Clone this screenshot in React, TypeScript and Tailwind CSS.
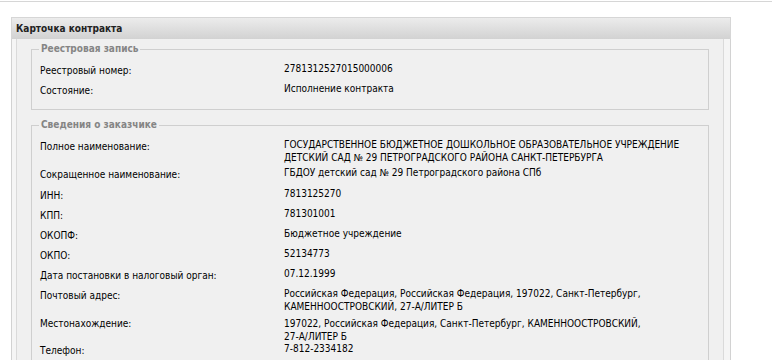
import React from "react";

type Row = { label: string; lines: string[]; h: number; lpt?: number };

const reg: Row[] = [
  { label: "Реестровый номер:", lines: ["2781312527015000006"], h: 20 },
  { label: "Состояние:", lines: ["Исполнение контракта"], h: 20 },
];

const cust: Row[] = [
  {
    label: "Полное наименование:",
    lines: [
      "ГОСУДАРСТВЕННОЕ БЮДЖЕТНОЕ ДОШКОЛЬНОЕ ОБРАЗОВАТЕЛЬНОЕ УЧРЕЖДЕНИЕ",
      "ДЕТСКИЙ САД № 29 ПЕТРОГРАДСКОГО РАЙОНА САНКТ-ПЕТЕРБУРГА",
    ],
    h: 28,
  },
  { label: "Сокращенное наименование:", lines: ["ГБДОУ детский сад № 29 Петроградского района СПб"], h: 21 },
  { label: "ИНН:", lines: ["7813125270"], h: 20 },
  { label: "КПП:", lines: ["781301001"], h: 20 },
  { label: "ОКОПФ:", lines: ["Бюджетное учреждение"], h: 20 },
  { label: "ОКПО:", lines: ["52134773"], h: 20 },
  { label: "Дата постановки в налоговый орган:", lines: ["07.12.1999"], h: 20 },
  {
    label: "Почтовый адрес:",
    lines: [
      "Российская Федерация, Российская Федерация, 197022, Санкт-Петербург,",
      "КАМЕННООСТРОВСКИЙ, 27-А/ЛИТЕР Б",
    ],
    h: 30,
  },
  {
    label: "Местонахождение:",
    lines: [
      "197022, Российская Федерация, Санкт-Петербург, КАМЕННООСТРОВСКИЙ,",
      "27-А/ЛИТЕР Б",
    ],
    h: 25,
    lpt: 4,
  },
  { label: "Телефон:", lines: ["7-812-2334182"], h: 20 },
];

function Rows({ rows }: { rows: Row[] }) {
  return (
    <div className="flex flex-col">
      {rows.map((r) => (
        <div key={r.label} className="flex shrink-0" style={{ height: r.h }}>
          <div
            className="w-[252px] shrink-0 pl-[8px] leading-[13px] whitespace-nowrap"
            style={{ paddingTop: r.lpt ?? 6 }}
          >
            {r.label}
          </div>
          <div className="pt-[4px] leading-[13px] whitespace-nowrap">
            {r.lines.map((l, i) => (
              <div key={i}>{l}</div>
            ))}
          </div>
        </div>
      ))}
    </div>
  );
}

function Fieldset({ title, children, className }: { title: string; children: React.ReactNode; className?: string }) {
  return (
    <fieldset className={"min-w-0 border border-[#cfcfcf] mx-[14px] " + (className ?? "")}>
      <legend className="ml-[7px] px-[2px] font-bold text-[#858585] leading-[12px]">{title}</legend>
      {children}
    </fieldset>
  );
}

export default function App() {
  return (
    <div
      className="w-[772px] h-[360px] overflow-hidden bg-white text-[10px] text-black"
      style={{ fontFamily: '"DejaVu Sans Condensed", "DejaVu Sans", sans-serif' }}
    >
      <div className="h-[2px] border-b border-[#d6d6d6]" />
      <div className="ml-[11px] mt-[15px] w-[720px]">
        <div className="h-[22px] border-t border-x border-[#d6d6d6] bg-gradient-to-b from-[#ececec] to-[#d2d2d2] pl-[4px] pt-[4px] leading-[13px] font-bold text-[#222]">
          Карточка контракта
        </div>
        <div className="border-x border-[#d2d2d2] bg-[#f5f5f5] pl-[4px] pr-[6px] h-[330px]">
          <div className="border-x border-[#dadada] bg-[#f0f0f0] h-full pt-[4px]">
            <Fieldset title="Реестровая запись" className="pt-[3px] pb-[11px]">
              <Rows rows={reg} />
            </Fieldset>
            <Fieldset title="Сведения о заказчике" className="mt-[9px] pt-[3px] pb-[10px]">
              <Rows rows={cust} />
            </Fieldset>
          </div>
        </div>
      </div>
    </div>
  );
}
